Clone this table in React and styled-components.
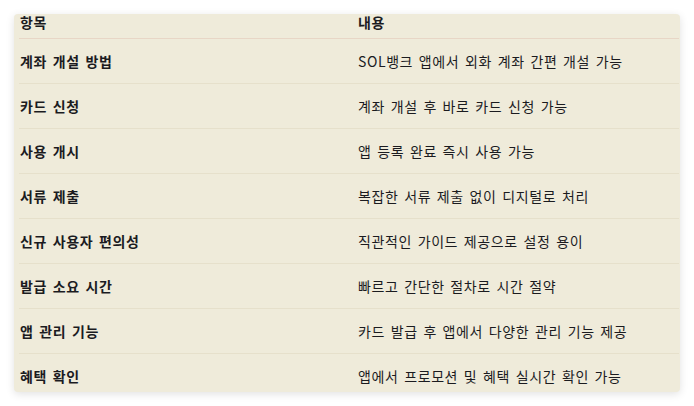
import React from 'react'
import styled, { createGlobalStyle } from 'styled-components'

const rows = [
  ['계좌 개설 방법', 'SOL뱅크 앱에서 외화 계좌 간편 개설 가능'],
  ['카드 신청', '계좌 개설 후 바로 카드 신청 가능'],
  ['사용 개시', '앱 등록 완료 즉시 사용 가능'],
  ['서류 제출', '복잡한 서류 제출 없이 디지털로 처리'],
  ['신규 사용자 편의성', '직관적인 가이드 제공으로 설정 용이'],
  ['발급 소요 시간', '빠르고 간단한 절차로 시간 절약'],
  ['앱 관리 기능', '카드 발급 후 앱에서 다양한 관리 기능 제공'],
  ['혜택 확인', '앱에서 프로모션 및 혜택 실시간 확인 가능'],
]

const App = () => {
  return (
    <>
      <GlobalStyle />
      <Card>
        <Table>
          <colgroup>
            <col style={{ width: 338 }} />
            <col />
          </colgroup>
          <thead>
            <tr>
              <HeadCell>항목</HeadCell>
              <HeadCell>내용</HeadCell>
            </tr>
          </thead>
          <tbody>
            {rows.map(([item, desc]) => (
              <Row key={item}>
                <Cell $bold>{item}</Cell>
                <Cell>{desc}</Cell>
              </Row>
            ))}
          </tbody>
        </Table>
      </Card>
    </>
  )
}

export default App

const GlobalStyle = createGlobalStyle`
  body {
    margin: 0;
    padding: 14px;
    background: #ffffff;
    font-family: "Noto Sans CJK KR", "Noto Sans", sans-serif;
  }
`

const Card = styled.div`
  width: 666px;
  height: 378px;
  overflow: hidden;
  box-sizing: border-box;
  padding: 0 1px 0 5px;
  background: #efebda;
  border-radius: 4px;
  box-shadow: 0 2px 8px rgba(0, 0, 0, 0.12);
`

const Table = styled.table`
  width: 100%;
  border-collapse: collapse;
  table-layout: fixed;
  color: #1b1b1f;
  font-size: 14px;
  letter-spacing: 0.6px;
  word-spacing: 2px;
`

const HeadCell = styled.th`
  text-align: left;
  font-weight: 700;
  height: 24px;
  padding: 0 1px 7px;
  line-height: 17px;
  box-sizing: border-box;
  border-bottom: 1px solid #e8d6c6;
`

const Row = styled.tr`
  border-bottom: 1px solid #e6e0cb;
`

const Cell = styled.td`
  height: 44px;
  padding: 0 1px;
  line-height: 20px;
  font-weight: ${({ $bold }) => ($bold ? 700 : 400)};
  vertical-align: middle;
  white-space: nowrap;
`
